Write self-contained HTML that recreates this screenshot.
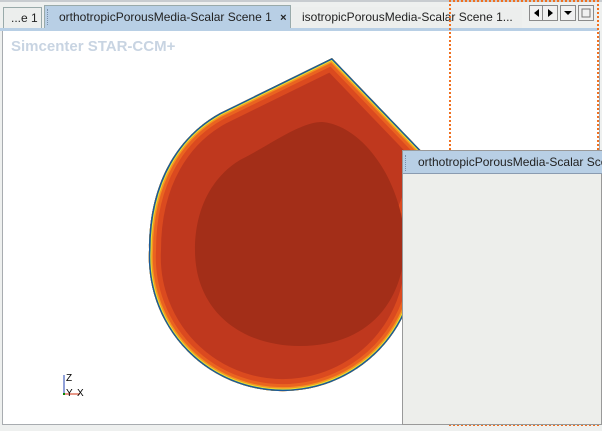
<!DOCTYPE html>
<html><head><style>
body{margin:0;width:602px;height:431px;overflow:hidden;background:#eef0ef;font-family:"Liberation Sans",sans-serif;position:relative}
.a{position:absolute}
.tab{position:absolute;top:7px;height:21px;font-size:12px;line-height:20px;color:#222;border:1px solid #9aa;border-bottom:none;box-sizing:border-box}
.btn{position:absolute;top:5px;width:16px;height:16px;border:1px solid #8a8a8a;background:#f0f0f0;box-sizing:border-box}
</style></head><body>
<div class="a" style="left:0;top:0;width:602px;height:2px;background:#c8ccd0"></div>
<div class="tab" style="left:3px;width:39px;background:#eceeed;padding-left:7px">...e 1</div>
<div class="tab" style="left:44px;width:247px;top:5px;height:24px;background:#b8cfe5;padding-left:14px;line-height:22px">orthotropicPorousMedia-Scalar Scene 1 <span style="margin-left:5px;font-weight:bold;font-size:11px">×</span></div>
<div class="a" style="left:47px;top:9px;width:2px;height:16px;border-left:1px dotted #7a90aa"></div>
<div class="tab" style="left:292px;width:230px;background:#eceeed;padding-left:10px;border:none">isotropicPorousMedia-Scalar Scene 1...</div>
<div class="a" style="left:0;top:28px;width:598px;height:3px;background:#b8cfe5"></div>
<div class="btn" style="left:529px"><svg width="14" height="14"><path d="M9,3 L4,7 L9,11Z" fill="#000"/></svg></div>
<div class="btn" style="left:542px"><svg width="14" height="14"><path d="M5,3 L10,7 L5,11Z" fill="#000"/></svg></div>
<div class="btn" style="left:560px"><svg width="14" height="14"><path d="M3,5 L11,5 L7,9Z" fill="#000"/></svg></div>
<div class="btn" style="left:578px"><svg width="14" height="14"><rect x="3" y="3" width="8" height="8" fill="none" stroke="#777"/></svg></div>
<div class="a" style="left:2px;top:31px;width:596px;height:393px;background:#fff;border:1px solid #a8acb0;border-top:none"></div>
<div class="a" style="left:11px;top:38px;font-size:15px;font-weight:bold;color:#c8d4e2">Simcenter STAR-CCM+</div>
<svg class="a" style="left:0;top:0" width="602" height="431">
<defs>
<path id="p" d="M332,58 L430,160 L409,212 A134,134 0 1 1 149,250 C149,180 180,135 220,113 Z"/>
<clipPath id="c"><use href="#p"/></clipPath></defs>
<use href="#p" fill="#bf381e"/>
<g clip-path="url(#c)" fill="none">
<use href="#p" stroke="#db4a1f" stroke-width="24"/>
<use href="#p" stroke="#ea6420" stroke-width="14"/>
<use href="#p" stroke="#f49422" stroke-width="8"/>
<use href="#p" stroke="#e8e030" stroke-width="5"/>
<use href="#p" stroke="#1a5a9a" stroke-width="3"/>
</g>
<path d="M322,122 C360,125 400,175 405,240 C405,300 370,346 300,346 C240,346 195,310 195,250 C195,205 215,175 240,160 C270,145 300,122 322,122 Z" fill="#a32e18"/>
<path d="M64,394 L80,394" stroke="#d03010"/>
<path d="M64,394 L64,375" stroke="#2040b0"/>
<rect x="63" y="393" width="2" height="2" fill="#080"/>
<text x="66" y="381" font-size="10" font-family="Liberation Sans">Z</text>
<text x="66" y="396" font-size="10" font-family="Liberation Sans">Y</text>
<text x="77" y="396" font-size="10" font-family="Liberation Sans">X</text>
</svg>
<div class="a" style="left:449px;top:0;width:150px;height:426px;border:2px dotted #f07020;box-sizing:border-box"></div>
<div class="a" style="left:402px;top:150px;width:200px;height:275px;background:#edeeeb;border:1px solid #999;box-sizing:border-box"></div>
<div class="a" style="left:403px;top:151px;width:199px;height:23px;background:#b8cfe5;border-bottom:1px solid #8a9bb0;font-size:12px;line-height:22px;padding-left:15px;box-sizing:border-box;white-space:nowrap;overflow:hidden;color:#222">orthotropicPorousMedia-Scalar Scene 1</div>
<div class="a" style="left:405px;top:155px;width:2px;height:16px;border-left:1px dotted #7a90aa"></div>
</body></html>
